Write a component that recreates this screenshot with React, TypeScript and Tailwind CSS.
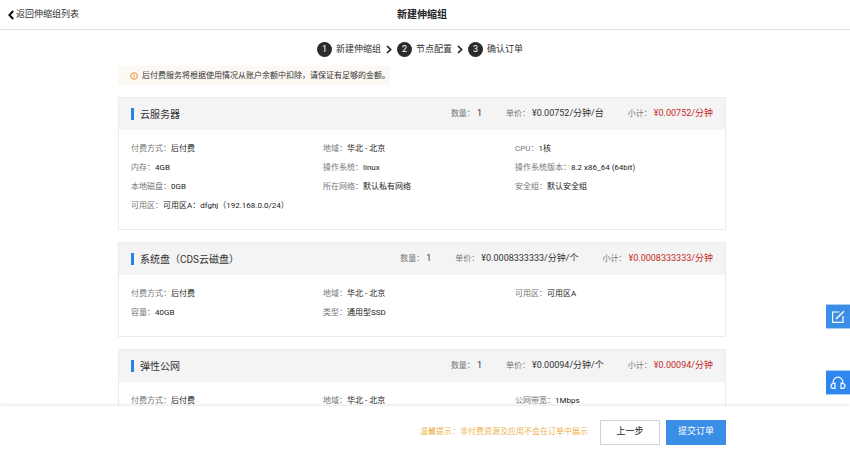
import { Fragment } from 'react';

interface Resource {
  title: string;
  count: string;
  price: string;
  subtotal: string;
  fields: [string, string][];
}

const steps = ['新建伸缩组', '节点配置', '确认订单'];

const resources: Resource[] = [
  {
    title: '云服务器',
    count: '1',
    price: '¥0.00752/分钟/台',
    subtotal: '¥0.00752/分钟',
    fields: [
      ['付费方式', '后付费'],
      ['地域', '华北 - 北京'],
      ['CPU', '1核'],
      ['内存', '4GB'],
      ['操作系统', 'linux'],
      ['操作系统版本', '8.2 x86_64 (64bit)'],
      ['本地磁盘', '0GB'],
      ['所在网络', '默认私有网络'],
      ['安全组', '默认安全组'],
      ['可用区', '可用区A：dfghj（192.168.0.0/24）'],
    ],
  },
  {
    title: '系统盘（CDS云磁盘）',
    count: '1',
    price: '¥0.0008333333/分钟/个',
    subtotal: '¥0.0008333333/分钟',
    fields: [
      ['付费方式', '后付费'],
      ['地域', '华北 - 北京'],
      ['可用区', '可用区A'],
      ['容量', '40GB'],
      ['类型', '通用型SSD'],
    ],
  },
  {
    title: '弹性公网',
    count: '1',
    price: '¥0.00094/分钟/个',
    subtotal: '¥0.00094/分钟',
    fields: [
      ['付费方式', '后付费'],
      ['地域', '华北 - 北京'],
      ['公网带宽', '1Mbps'],
    ],
  },
];

function Chevron() {
  return (
    <svg width="6" height="9" viewBox="0 0 6 9" fill="none" stroke="#222" strokeWidth="1.7">
      <path d="M1 1l3.6 3.5L1 8" />
    </svg>
  );
}

function ResourceCard({ title, count, price, subtotal, fields }: Resource) {
  return (
    <section className="border border-[#ebebeb] bg-white">
      <div className="flex h-8 items-center bg-[#f4f4f4] px-3">
        <span className="mr-1.5 h-3 w-[3px] bg-[#2a82e4]" />
        <h2 className="text-[10px] text-[#333]">{title}</h2>
        <dl className="ml-auto flex gap-6 text-[9px] text-[#333]">
          <div className="flex items-center gap-0.5">
            <dt className="text-[8px] text-[#777]">数量：</dt>
            <dd>{count}</dd>
          </div>
          <div className="flex items-center gap-0.5">
            <dt className="text-[8px] text-[#777]">单价：</dt>
            <dd>{price}</dd>
          </div>
          <div className="flex items-center gap-0.5">
            <dt className="text-[8px] text-[#777]">小计：</dt>
            <dd className="text-[#c62828]">{subtotal}</dd>
          </div>
        </dl>
      </div>
      <dl className="grid grid-cols-3 pt-[9px] pr-[18px] pb-[14px] pl-3 text-[8px] leading-[19px]">
        {fields.map(([label, value]) => (
          <div key={label} className="flex whitespace-nowrap">
            <dt className="text-[#777]">{label}：</dt>
            <dd className="text-[#222]">{value}</dd>
          </div>
        ))}
      </dl>
    </section>
  );
}

export default function App() {
  return (
    <div className="flex h-screen flex-col bg-white font-['Roboto','Noto_Sans_CJK_SC',sans-serif] text-[#333]">
      <header className="grid h-[30px] shrink-0 grid-cols-[1fr_auto_1fr] items-center border-b border-[#e2e2e2] pr-[14px] pl-2">
        <a href="#" className="flex items-center gap-0.5 text-[9px]">
          <svg width="6" height="10" viewBox="0 0 6 10" fill="none" stroke="#111" strokeWidth="2">
            <path d="M5.2 1L1.4 5l3.8 4" />
          </svg>
          返回伸缩组列表
        </a>
        <h1 className="text-[10px] font-bold text-[#222]">新建伸缩组</h1>
      </header>

      <main className="min-h-0 flex-1 overflow-y-auto pt-3 pr-1.5 [scrollbar-width:none]">
        <ol className="flex h-[15px] items-center justify-center pr-1 text-[9px]">
          {steps.map((step, i) => (
            <Fragment key={step}>
              {i > 0 && (
                <li aria-hidden="true" className="mx-[5px]">
                  <Chevron />
                </li>
              )}
              <li className="flex items-center gap-1">
                <span className="flex size-[15px] items-center justify-center rounded-full bg-[#2b2b2b] text-white">
                  {i + 1}
                </span>
                {step}
              </li>
            </Fragment>
          ))}
        </ol>

        <div className="mx-auto flex w-full max-w-[608px] flex-col gap-3 pt-[9px] pb-3">
          <p className="flex h-[19px] w-[272px] items-center gap-1 bg-[#fcf8f3] pl-3 text-[8px] whitespace-nowrap">
            <svg width="8" height="8" viewBox="0 0 8 8" fill="none" stroke="#e8902c" className="shrink-0">
              <circle cx="4" cy="4" r="3.3" />
              <path d="M4 2v2.6M4 5.2v.9" />
            </svg>
            后付费服务将根据使用情况从账户余额中扣除，请保证有足够的金额。
          </p>
          {resources.map(resource => (
            <ResourceCard key={resource.title} {...resource} />
          ))}
        </div>
      </main>

      <footer className="z-10 h-[50px] shrink-0 bg-white pr-1.5 shadow-[0_0_4px_rgba(0,0,0,0.15)]">
        <div className="mx-auto flex h-full w-full max-w-[608px] items-center justify-end gap-1.5 pt-0.5 text-[9px]">
          <p className="mr-1.5 text-[8px] text-[#edb14d]">温馨提示：非付费资源及应用不会在订单中展示</p>
          <button className="h-[25px] w-[60px] border border-[#d2d2d2] bg-white text-[#222]">上一步</button>
          <button className="h-[25px] w-[60px] bg-[#3a8ee6] text-white">提交订单</button>
        </div>
      </footer>

      <div className="fixed right-0 bottom-[61px] z-20 flex flex-col gap-[41px]">
        <button
          aria-label="反馈"
          className="flex h-[25px] w-6 items-center justify-center border-y border-[#a9cff7] bg-[#3a8ee6]"
        >
          <svg width="14" height="14" viewBox="0 0 14 14" fill="none" stroke="white" strokeWidth="1.2">
            <path d="M8.5 2H1.6v10.4H12V6" />
            <path d="M5 9L13 1.2" strokeWidth="1.5" />
          </svg>
        </button>
        <button
          aria-label="客服"
          className="flex h-[25px] w-6 items-center justify-center border-y border-[#a9cff7] bg-[#2f86ee]"
        >
          <svg width="16" height="14" viewBox="0 0 16 14" fill="none" stroke="white" strokeWidth="1.2">
            <path d="M3.2 7.5V6a4.8 4.8 0 0 1 9.6 0v1.5" />
            <path d="M5 7.2v5.2H3.4A2.2 2.2 0 0 1 1 10a2.4 2.4 0 0 1 2.4-2.5zM11 7.2v5.2h1.6A2.2 2.2 0 0 0 15 10a2.4 2.4 0 0 0-2.4-2.5z" />
          </svg>
        </button>
      </div>
    </div>
  );
}
